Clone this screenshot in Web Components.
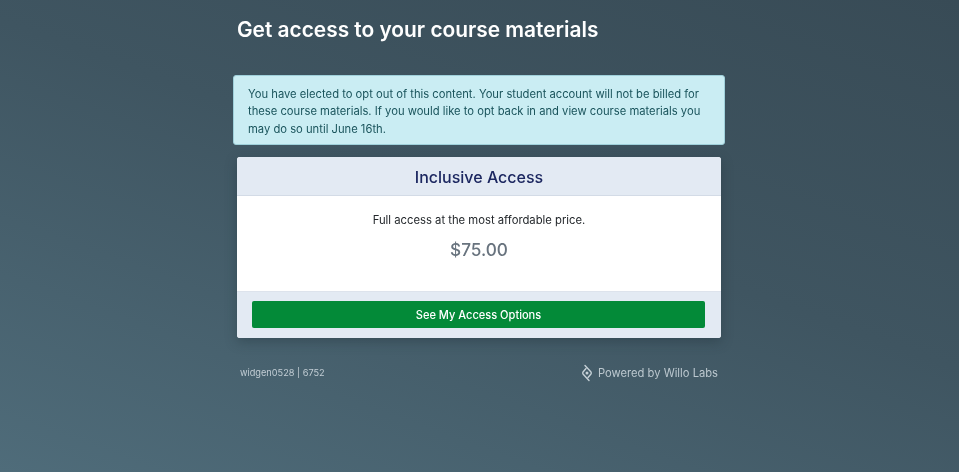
<!DOCTYPE html>
<html lang="en">
<head>
<meta charset="utf-8">
<title>Course materials</title>
<style>
    html, body { height: 100%; margin: 0; }
    body {
        background: linear-gradient(200deg, #384b56 0%, #3f5561 45%, #4f6c7a 100%);
        font-family: Inter, "Liberation Sans", sans-serif;
        overflow: hidden;
    }
</style>
</head>
<body>
<access-page>
    <span slot="title">Get access to your course materials</span>
    <opt-alert slot="alert">You have elected to opt out of this content. Your student account will not be billed for these course materials. If you would like to opt back in and view course materials you may do so until June 16th.</opt-alert>
    <offer-card slot="card" name="Inclusive Access" price="$75.00" action="See My Access Options">Full access at the most affordable price.</offer-card>
    <page-footer slot="footer" code="widgen0528 | 6752"></page-footer>
</access-page>

<script>
/// Centered column holding the heading, the alert, the offer and the footer.
class AccessPage extends HTMLElement {
    connectedCallback() {
        const shadow = this.attachShadow({mode: "open"})
        shadow.innerHTML = `
            <style>
                :host { display: block; width: 484px; margin: 0 auto; padding-right: 1px; filter: blur(.3px); }
                h1 {
                    margin: 0;
                    padding-top: 15px;
                    height: 75px;
                    box-sizing: border-box;
                    font-size: 20.86px;
                    line-height: 29px;
                    font-weight: 600;
                    color: #fff;
                }
            </style>
            <h1><slot name="title"></slot></h1>
            <slot name="alert"></slot>
            <slot name="card"></slot>
            <slot name="footer"></slot>
        `
    }
}

class OptAlert extends HTMLElement {
    connectedCallback() {
        const shadow = this.attachShadow({mode: "open"})
        shadow.innerHTML = `
            <style>
                :host {
                    display: block;
                    margin: 0 -4px 12px;
                    padding: 10px 14px 8px;
                    height: 70px;
                    box-sizing: border-box;
                    background: #caedf3;
                    border: 1px solid #9fd0da;
                    border-radius: 3px;
                    color: #1a545c;
                    font-size: 11.22px;
                    line-height: 17.3px;
                }
            </style>
            <slot></slot>
        `
    }
}

class OfferCard extends HTMLElement {
    connectedCallback() {
        const shadow = this.attachShadow({mode: "open"})
        shadow.innerHTML = `
            <style>
                :host {
                    display: block;
                    background: #fff;
                    border-radius: 3px;
                    box-shadow: 0 4px 12px rgba(30, 45, 55, .35);
                    overflow: hidden;
                }
                header {
                    height: 39px;
                    box-sizing: border-box;
                    display: flex;
                    align-items: center;
                    justify-content: center;
                    padding-top: 1px;
                    background: #e3eaf3;
                    border-bottom: 1px solid #d3dbe6;
                    color: #1c2760;
                    font-size: 16px;
                    font-weight: 500;
                }
                .body {
                    height: 96px;
                    box-sizing: border-box;
                    padding-top: 16px;
                    text-align: center;
                    border-bottom: 1px solid #dde3ec;
                }
                p { margin: 0; color: #24282c; font-size: 11.27px; line-height: 16px; }
                .price { margin-top: 11px; color: #68737e; font-size: 17.2px; font-weight: 500; line-height: 22px; }
                footer {
                    height: 46px;
                    box-sizing: border-box;
                    padding: 9px 16px 0 15px;
                    background: #e3eaf3;
                }
                button {
                    display: block;
                    width: 100%;
                    height: 27px;
                    padding: 1px 0 0;
                    border: 0;
                    border-radius: 2px;
                    background: #038a38;
                    color: #fff;
                    font: 500 11.05px Inter, "Liberation Sans", sans-serif;
                }
            </style>
            <header>${this.getAttribute("name")}</header>
            <div class="body">
                <p><slot></slot></p>
                <div class="price">${this.getAttribute("price")}</div>
            </div>
            <footer><button type="button">${this.getAttribute("action")}</button></footer>
        `
    }
}

class PageFooter extends HTMLElement {
    connectedCallback() {
        const shadow = this.attachShadow({mode: "open"})
        shadow.innerHTML = `
            <style>
                :host {
                    display: flex;
                    align-items: center;
                    justify-content: space-between;
                    margin-top: 25px;
                    padding: 0 3px;
                    height: 20px;
                    color: #c3ced5;
                }
                .code { font-size: 9.2px; padding-bottom: 1px; }
                .brand { display: flex; align-items: center; gap: 5px; font-size: 11.2px; color: #bcc8cf; }
                svg { display: block; }
            </style>
            <span class="code">${this.getAttribute("code")}</span>
            <span class="brand">
                <svg width="12" height="18" viewBox="0 0 12 18" fill="none" stroke="#c6d1d7" stroke-width="1.4" stroke-linejoin="round" stroke-linecap="round">
                    <path d="M4 1.5 L10 8 Q10.6 9 10 10 L7 13.5"/>
                    <path d="M8 16.5 L2 10 Q1.4 9 2 8 L5 4.5"/>
                    <circle cx="6" cy="9" r="1.5" fill="#c6d1d7" stroke="none"/>
                </svg>
                Powered by Willo Labs
            </span>
        `
    }
}

customElements.define("opt-alert", OptAlert)
customElements.define("offer-card", OfferCard)
customElements.define("page-footer", PageFooter)
customElements.define("access-page", AccessPage)
</script>
</body>
</html>
